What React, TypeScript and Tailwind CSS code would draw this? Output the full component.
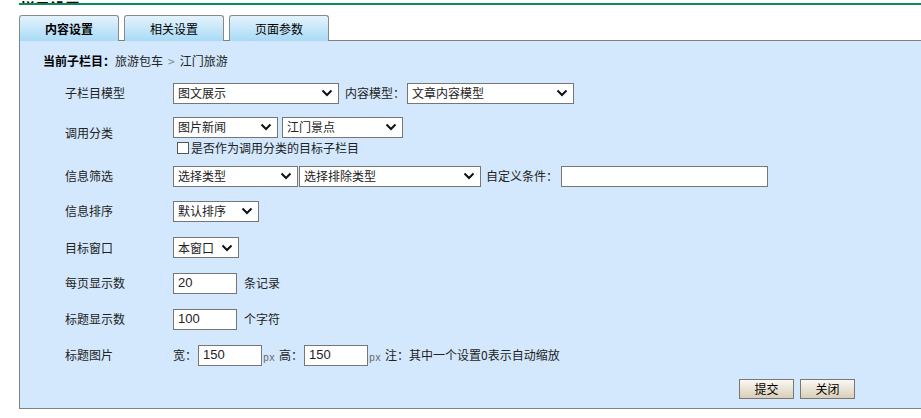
import { ReactNode } from 'react';

const FONT = { fontFamily: '"Noto Sans CJK SC", "Liberation Sans", sans-serif' };

function Chevron() {
  return (
    <svg width="12" height="8" viewBox="0 0 12 8" className="shrink-0">
      <path d="M1.5 1.5 L6 6 L10.5 1.5" fill="none" stroke="#111" strokeWidth="2" />
    </svg>
  );
}

function Select({ value, width }: { value: string; width: string }) {
  return (
    <div
      className={`${width} h-[21px] bg-white border border-[#767676] flex items-center justify-between pl-[4px] pr-[5px] text-[12px] text-[#222] shrink-0`}
    >
      <span className="whitespace-nowrap">{value}</span>
      <Chevron />
    </div>
  );
}

function TextInput({ value, width }: { value: string; width: string }) {
  return (
    <div
      className={`${width} h-[21px] bg-white border border-[#767676] flex items-center pl-[4px] text-[13px] text-[#222] shrink-0`}
      style={{ fontFamily: '"Liberation Sans", Arial, sans-serif' }}
    >
      {value}
    </div>
  );
}

function Row({ label, height, children }: { label: string; height: string; children: ReactNode }) {
  return (
    <div className={`flex items-center ${height}`}>
      <div className="w-[153px] pl-[45px] text-[12px] text-[#222] shrink-0">{label}</div>
      <div className="flex items-center">{children}</div>
    </div>
  );
}

function Px() {
  return (
    <span className="text-[10px] text-[#666] mt-[6px] mx-[1px]" style={{ fontFamily: '"Liberation Mono", monospace' }}>
      px
    </span>
  );
}

export default function App() {
  const tabs = ['内容设置', '相关设置', '页面参数'];

  return (
    <div className="w-[921px] h-[418px] overflow-hidden bg-white" style={FONT}>
      {/* cropped page title */}
      <div className="ml-[19px] h-[3px] overflow-hidden flex items-end">
        <span className="pl-[1px] text-[15px] leading-[15px] font-bold text-black translate-y-[12px]">栏目设置</span>
      </div>
      <div className="ml-[19px] h-[2px] bg-[#0a8a5c]" />

      {/* tabs */}
      <div className="ml-[19px] mt-[10px] flex gap-[5px] h-[25px]">
        {tabs.map((t, i) => (
          <div
            key={t}
            className={`w-[100px] h-[26px] border border-[#8a8a8a] border-b-0 rounded-t-[3px] bg-gradient-to-b from-[#e4f3fd] to-[#a8daf6] flex items-center justify-center text-[12px] text-black ${
              i === 0 ? 'font-bold' : ''
            }`}
          >
            {t}
          </div>
        ))}
      </div>

      {/* panel */}
      <div className="ml-[19px] w-[960px] h-[369px] border-t border-l border-b border-[#808080] bg-[#d3e8fc]">
        <div className="h-[40px] flex items-center pl-[23px] text-[12px] text-[#222]">
          <span className="font-bold text-black">当前子栏目：</span>
          <span>旅游包车</span>
          <span className="text-[#888] mx-[5px]">&gt;</span>
          <span>江门旅游</span>
        </div>

        <Row label="子栏目模型" height="h-[24px]">
          <Select value="图文展示" width="w-[166px]" />
          <span className="text-[12px] text-[#222] ml-[6px] mr-[2px]">内容模型：</span>
          <Select value="文章内容模型" width="w-[167px]" />
        </Row>

        <Row label="调用分类" height="h-[55px]">
          <div className="flex flex-col pt-[9px]">
            <div className="flex gap-[4px]">
              <Select value="图片新闻" width="w-[105px]" />
              <Select value="江门景点" width="w-[121px]" />
            </div>
            <div className="flex items-center h-[20px] pl-[4px] text-[12px] text-[#222]">
              <div className="w-[12px] h-[12px] bg-white border border-[#555] mr-[2px]" />
              是否作为调用分类的目标子栏目
            </div>
          </div>
        </Row>

        <Row label="信息筛选" height="h-[32px]">
          <Select value="选择类型" width="w-[125px]" />
          <div className="w-[1px]" />
          <Select value="选择排除类型" width="w-[182px]" />
          <span className="text-[12px] text-[#222] ml-[5px] mr-[3px]">自定义条件：</span>
          <TextInput value="" width="w-[207px]" />
        </Row>

        <Row label="信息排序" height="h-[38px]">
          <Select value="默认排序" width="w-[86px]" />
        </Row>

        <Row label="目标窗口" height="h-[35px]">
          <Select value="本窗口" width="w-[66px]" />
        </Row>

        <Row label="每页显示数" height="h-[36px]">
          <TextInput value="20" width="w-[64px]" />
          <span className="text-[12px] text-[#222] ml-[7px]">条记录</span>
        </Row>

        <Row label="标题显示数" height="h-[36px]">
          <TextInput value="100" width="w-[64px]" />
          <span className="text-[12px] text-[#222] ml-[7px]">个字符</span>
        </Row>

        <Row label="标题图片" height="h-[36px]">
          <span className="text-[12px] text-[#222] mr-[1px]">宽：</span>
          <TextInput value="150" width="w-[64px]" />
          <Px />
          <span className="text-[12px] text-[#222] ml-[3px] mr-[1px]">高：</span>
          <TextInput value="150" width="w-[64px]" />
          <Px />
          <span className="text-[12px] text-[#222] ml-[3px]">注：其中一个设置0表示自动缩放</span>
        </Row>

        <div className="h-[31px] flex items-center pl-[719px] gap-[6px]">
          {['提交', '关闭'].map((b) => (
            <div
              key={b}
              className="w-[55px] h-[20px] border border-[#777] bg-gradient-to-b from-[#fbf9f4] to-[#d9ceb7] flex items-center justify-center text-[12px] text-black"
            >
              {b}
            </div>
          ))}
        </div>
      </div>
    </div>
  );
}
